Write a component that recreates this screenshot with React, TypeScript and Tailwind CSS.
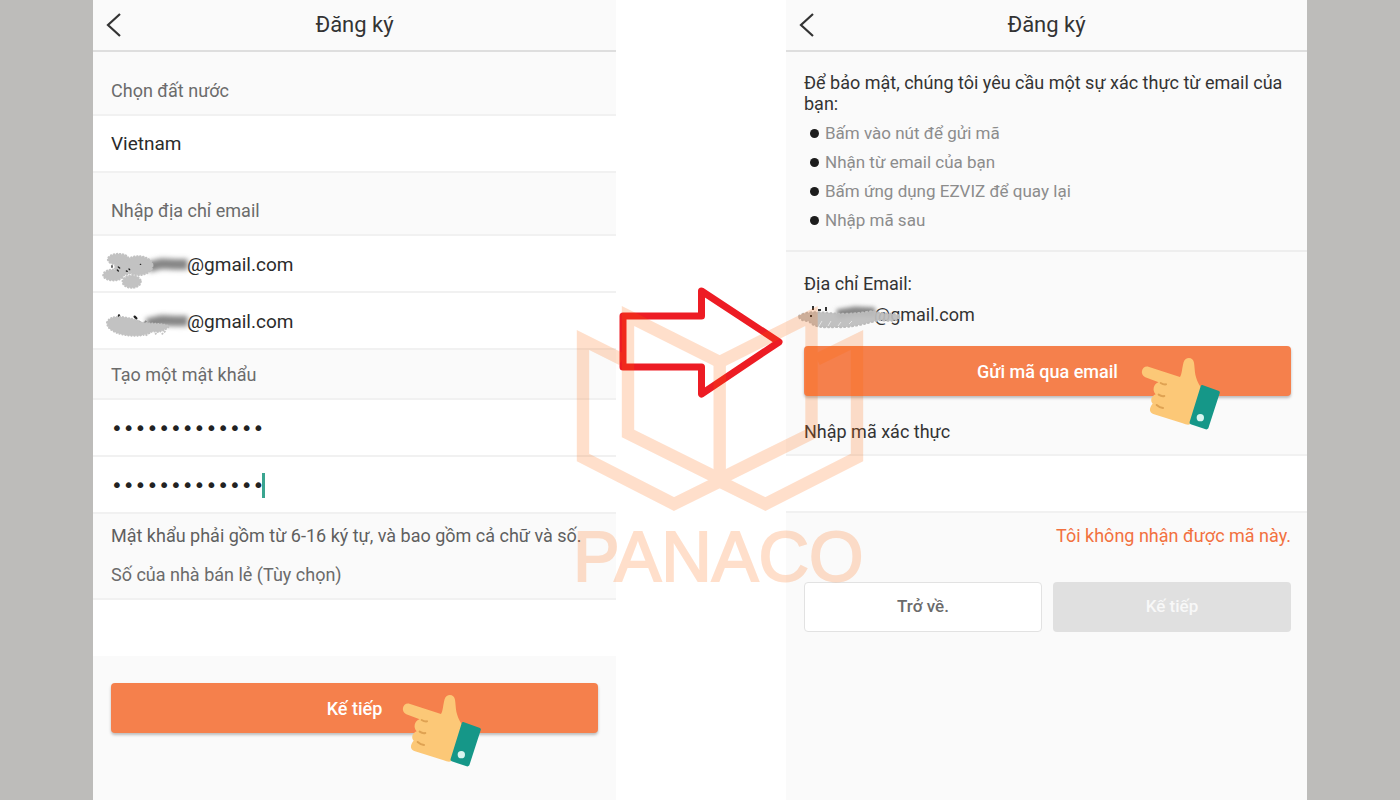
import { useState } from 'react'
import type { ReactNode } from 'react'

const STEPS = [
  'Bấm vào nút để gửi mã',
  'Nhận từ email của bạn',
  'Bấm ứng dụng EZVIZ để quay lại',
  'Nhập mã sau',
]

function Header({ title }: { title: string }) {
  return (
    <header className="relative flex h-[52px] items-center justify-center border-b-2 border-[#dedede]">
      <button type="button" aria-label="Back" className="absolute left-3 flex h-8 w-5 items-center">
        <svg className="h-6 w-4" viewBox="0 0 16 24" fill="none" stroke="#333333" strokeWidth={2.2}>
          <path d="M15 1L3 12l12 11" />
        </svg>
      </button>
      <h1 className="text-[22px] leading-7 text-[#333333]">{title}</h1>
    </header>
  )
}

// White form row that holds one control
function Row({ children }: { children?: ReactNode }) {
  return <div className="relative h-[57px] border-b-2 border-[#f1f1f1] bg-white">{children}</div>
}

function Hand() {
  return (
    <svg className="h-[90px] w-[100px]" viewBox="0 0 300 270" aria-hidden="true">
      <path
        fill="#fcc877"
        d="M55 62L150 93C156 84 156 66 161 48C166 31 190 32 192 50C196 78 192 92 214 126L180 235C174 238 166 235 158 232L72 205C56 199 57 186 68 173C60 164 63 151 77 145C66 134 70 114 86 109L46 94C28 86 35 58 55 62Z"
      />
      <g stroke="#dfa252" strokeWidth={6} strokeLinecap="round" fill="none">
        <path d="M92 111q8 5 16 4" />
        <path d="M86 146q9 6 17 4" />
        <path d="M80 177q9 8 19 9" />
      </g>
      <path fill="#159788" d="M217 117l50 18q4 3 2 7l-34 105q-3 4-8 3l-45-15q-5-3-3-8l33-106q2-5 5-4z" />
      <circle cx="211" cy="215" r="11" fill="#d9f5f0" />
    </svg>
  )
}

function SmudgeOne() {
  return (
    <svg className="pointer-events-none absolute top-0 left-0.5 h-[57px] w-[120px]" viewBox="0 -27 360 171" aria-hidden="true">
      <defs>
        <filter id="soft1" filterUnits="userSpaceOnUse" x="100" y="0" width="260" height="130">
          <feGaussianBlur stdDeviation="8" />
        </filter>
      </defs>
      <path d="M160 66L200 56L240 58H278" stroke="#868686" strokeWidth={32} fill="none" filter="url(#soft1)" />
      <g fill="#c2c2c2" stroke="#c2c2c2" strokeWidth={7} strokeLinecap="round" strokeDasharray="1 8">
        <ellipse cx="70" cy="43" rx="31" ry="16" />
        <ellipse cx="130" cy="62" rx="42" ry="28" />
        <ellipse cx="55" cy="90" rx="30" ry="16" />
        <ellipse cx="110" cy="110" rx="27" ry="18" />
        <ellipse cx="86" cy="68" rx="26" ry="22" />
      </g>
      <path d="M51 62v5M70 66l4 3M67 75l3 3M94 78l3 1M102 72l2 2M136 58h1" stroke="#222222" strokeWidth={4} strokeLinecap="round" />
    </svg>
  )
}

function SmudgeTwo() {
  return (
    <svg className="pointer-events-none absolute top-0 left-0.5 h-[57px] w-[120px]" viewBox="0 144 360 171" aria-hidden="true">
      <defs>
        <filter id="soft2" filterUnits="userSpaceOnUse" x="100" y="170" width="260" height="130">
          <feGaussianBlur stdDeviation="8" />
        </filter>
      </defs>
      <path d="M155 236L200 226L240 228H278" stroke="#868686" strokeWidth={32} fill="none" filter="url(#soft2)" />
      <path d="M72 211v5M119 215l5 5" stroke="#222222" strokeWidth={7} strokeLinecap="round" />
      <path d="M130 228l14 12 10-12" stroke="#8a8a8a" strokeWidth={6} fill="none" />
      <path
        d="M36 232C46 208 88 214 126 226C150 242 190 230 222 244C208 258 190 264 172 258C150 278 84 276 54 258Q36 248 36 232Z"
        fill="#c2c2c2"
        stroke="#c2c2c2"
        strokeWidth={6}
        strokeLinecap="round"
        strokeDasharray="1 8"
      />
      <path d="M134 272l14-10M152 272l22-16M180 268l14-12M200 268l12-10" stroke="#c2c2c2" strokeWidth={5} strokeDasharray="6 3" />
    </svg>
  )
}

function SmudgeThree() {
  return (
    <svg className="pointer-events-none absolute -top-2 -left-[9px] h-10 w-[120px]" viewBox="0 0 120 40" aria-hidden="true">
      <defs>
        <filter id="soft3" filterUnits="userSpaceOnUse" x="20" y="0" width="90" height="40">
          <feGaussianBlur stdDeviation="2" />
        </filter>
      </defs>
      <path d="M42 19L60 16L80 17" stroke="#868686" strokeWidth={9} fill="none" filter="url(#soft3)" />
      <path
        d="M4 21C10 16 24 17 34 18C54 20 64 18 78 16C88 20 98 17 105 21C104 27 92 26 84 25C74 28 56 33 42 32C28 33 18 32 14 26Q4 26 4 21Z"
        fill="#bcbcbc"
        fillOpacity={0.92}
        stroke="#bcbcbc"
        strokeWidth={2}
        strokeLinecap="round"
        strokeDasharray="1 3"
      />
      <path d="M18 11v4M16 20v2M23 15h3M31 12v4" stroke="#333333" strokeWidth={2} />
      <path d="M24 31l3-5M33 31l3-5M43 31l3-4M54 29l3-3" stroke="#e4e4e4" strokeWidth={1} />
    </svg>
  )
}

function Overlay() {
  return (
    <svg
      className="pointer-events-none absolute top-[280px] left-1/2 z-10 h-[320px] w-[332px] -translate-x-1/2"
      viewBox="535 280 332 320"
      fill="none"
    >
      <path
        d="M623 316H701.5V291L779 342L701.5 394V367H623Z"
        stroke="#ed1c24"
        strokeWidth={7}
        strokeLinejoin="round"
      />
      <g opacity={0.2}>
        <g stroke="#ff6400" strokeWidth={12.4}>
          <path d="M622 359.500L583 340V457.500L674 504L719.700 481.500L765.400 504L857 457.500V340L817 359.500" />
          <path d="M719.700 362L628 316V433.500L719.700 479L811.500 433.500V316Z" />
          <path d="M719.700 362V479" />
        </g>
        <text
          x="573"
          y="581"
          fill="#ff6400"
          stroke="#ff6400"
          strokeWidth={2}
          className="font-['Liberation_Sans',Arial,sans-serif] text-[70px]"
        >
          PANACO
        </text>
      </g>
    </svg>
  )
}

const sectionLabel = 'flex items-end border-b-2 border-[#f1f1f1] px-[18px] pb-[11px] text-[18px] leading-6 text-[#6b6b6b]'
const field = 'h-full w-full bg-transparent px-[18px] pt-0.5 text-[19px] text-[#2b2b2b] outline-none'
const secret = "h-full w-full bg-transparent px-[18px] font-['DejaVu_Sans',sans-serif] text-[20px] text-[#222222] outline-none"
const primary = 'h-[50px] w-full rounded bg-[#f5804c] text-[18px] font-medium text-white shadow-[0_2px_3px_rgba(0,0,0,0.25)]'

function SignUp() {
  const [country, setCountry] = useState('Vietnam')

  return (
    <section className="bg-[#fafafa]">
      <Header title="Đăng ký" />
      <form onSubmit={(e) => e.preventDefault()}>
        <label htmlFor="country" className={`${sectionLabel} h-16`}>Chọn đất nước</label>
        <Row>
          <select
            id="country"
            value={country}
            onChange={(e) => setCountry(e.target.value)}
            className={`${field} appearance-none`}
          >
            <option>Vietnam</option>
          </select>
        </Row>
        <label htmlFor="email" className={`${sectionLabel} h-[63px]`}>Nhập địa chỉ email</label>
        <Row>
          <input id="email" type="text" defaultValue="@gmail.com" className={`${field} pl-[94px]`} />
          <SmudgeOne />
        </Row>
        <Row>
          <input type="text" aria-label="Email" defaultValue="@gmail.com" className={`${field} pl-[94px]`} />
          <SmudgeTwo />
        </Row>
        <label htmlFor="password" className={`${sectionLabel} h-[50px]`}>Tạo một mật khẩu</label>
        <Row>
          <input id="password" type="password" defaultValue="0000000000000" className={secret} />
        </Row>
        <Row>
          <input type="password" aria-label="Password" defaultValue="0000000000000" className={secret} />
          <span className="absolute top-4 left-[169px] h-[25px] w-[3px] bg-[#3aa590]" />
        </Row>
        <p className="px-[18px] pt-2.5 text-[18px] leading-6 text-[#5f5f5f]">
          Mật khẩu phải gồm từ 6-16 ký tự, và bao gồm cả chữ và số.
        </p>
        <label htmlFor="retailer" className={`${sectionLabel} h-[52px]`}>Số của nhà bán lẻ (Tùy chọn)</label>
        <div className="h-14 bg-white">
          <input id="retailer" type="text" className={field} />
        </div>
        <div className="relative mx-[18px] mt-[27px]">
          <button type="submit" className={primary}>Kế tiếp</button>
          <span className="pointer-events-none absolute top-0 left-1/2 ml-9">
            <Hand />
          </span>
        </div>
      </form>
    </section>
  )
}

function Verify() {
  return (
    <section className="bg-[#fafafa]">
      <Header title="Đăng ký" />
      <div className="border-b-2 border-[#eeeeee] pt-5 pr-4 pb-[15px] pl-[18px]">
        <p className="text-[18px] leading-[21px] text-[#333333]">
          Để bảo mật, chúng tôi yêu cầu một sự xác thực từ email của bạn:
        </p>
        <ul className="mt-[5px] px-1.5">
          {STEPS.map((step) => (
            <li key={step} className="flex items-center gap-1.5 text-[17px] leading-[29px] text-[#8c8c8c]">
              <span className="size-[9px] rounded-full bg-[#1c1c1c]" />
              {step}
            </li>
          ))}
        </ul>
      </div>
      <form onSubmit={(e) => e.preventDefault()}>
        <div className="pt-5 pr-4 pl-[18px]">
          <p className="text-[18px] leading-6 text-[#333333]">Địa chỉ Email:</p>
          <p className="relative mt-[7px] pl-[70px] text-[18px] leading-6 text-[#333333]">
            @gmail.com
            <SmudgeThree />
          </p>
          <div className="relative mt-[19px]">
            <button type="button" className={primary}>Gửi mã qua email</button>
            <span className="pointer-events-none absolute top-0 left-1/2 ml-[82px]">
              <Hand />
            </span>
          </div>
        </div>
        <label htmlFor="code" className="flex h-[60px] items-end border-b-2 border-[#f1f1f1] px-[18px] pb-2.5 text-[18px] leading-6 text-[#333333]">
          Nhập mã xác thực
        </label>
        <Row>
          <input id="code" type="text" className={field} />
        </Row>
        <div className="pt-[11px] pr-4 pl-[18px] text-right">
          <a href="#resend" className="text-[18px] leading-6 text-[#f2713f]">Tôi không nhận được mã này.</a>
        </div>
        <div className="mt-[33px] grid grid-cols-2 gap-[11px] pr-4 pl-[18px]">
          <button type="button" className="h-[50px] rounded border border-[#e2e2e2] bg-white text-[17px] font-medium text-[#6b6b6b]">
            Trở về.
          </button>
          <button type="submit" disabled className="h-[50px] rounded bg-[#e0e0e0] text-[17px] font-medium text-[#f8f8f8]">
            Kế tiếp
          </button>
        </div>
      </form>
    </section>
  )
}

export default function App() {
  return (
    <main className="min-h-screen bg-[#bdbcba] px-[93px] font-[Roboto,sans-serif]">
      <div className="grid min-h-screen grid-cols-[523fr_170px_521fr] bg-white">
        <SignUp />
        <div className="relative">
          <Overlay />
        </div>
        <Verify />
      </div>
    </main>
  )
}
